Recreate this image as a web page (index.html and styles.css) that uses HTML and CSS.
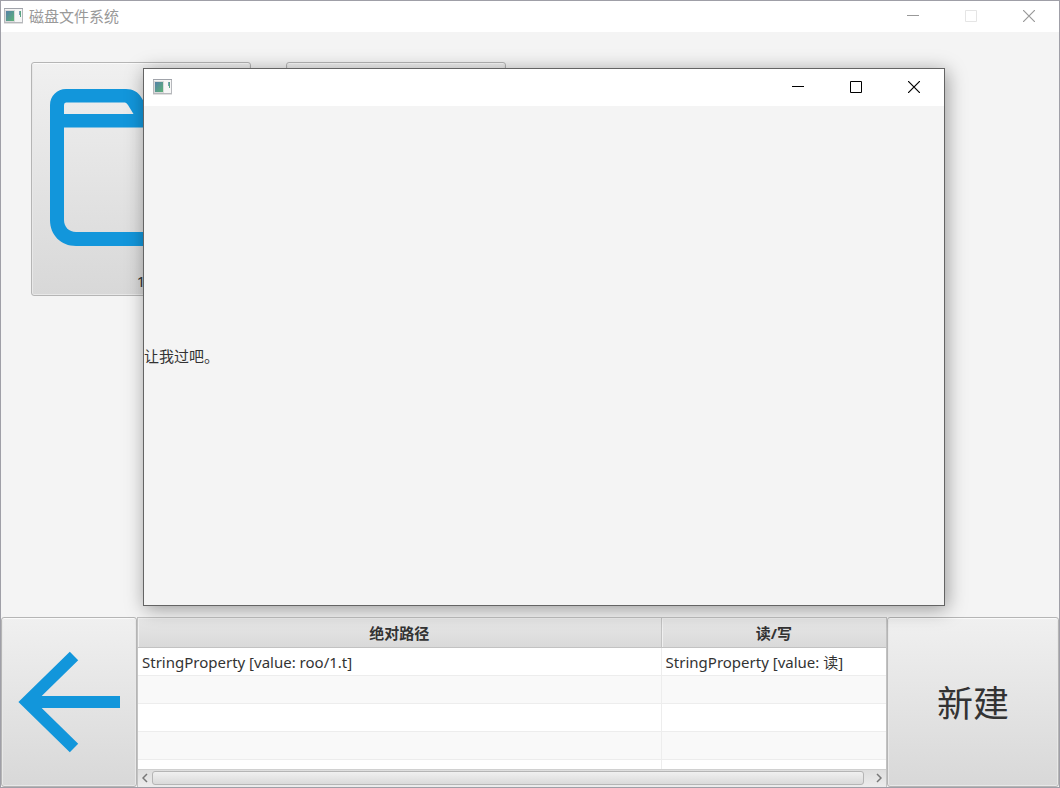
FILE: index.html
```html
<!DOCTYPE html>
<html lang="zh-CN">
<head>
<meta charset="utf-8">
<title>磁盘文件系统</title>
<link rel="stylesheet" href="styles.css">
</head>
<body>
<svg class="defs" aria-hidden="true">
  <defs>
    <linearGradient id="screen" x1="0" y1="0" x2="1" y2="1">
      <stop offset="0" stop-color="#5580a8"/>
      <stop offset="1" stop-color="#5cb377"/>
    </linearGradient>
    <symbol id="app" viewBox="0 0 19 16">
      <rect x=".5" y=".5" width="18" height="14" fill="#f6f6f6" stroke="#b6b8bc"/>
      <path d="M0 .5h19" stroke="#a0a3aa"/>
      <path d="M0 15.500h19" stroke="#e0e0e0"/>
      <rect x="1.500" y="2.500" width="9" height="11" fill="#fff" stroke="#dadada"/>
      <rect x="2" y="3" width="8" height="10" fill="url(#screen)"/>
      <path d="M16.500 3v6" stroke="#5aa583"/>
      <path d="M15.500 3v4" stroke="#7d9fb5"/>
    </symbol>
    <symbol id="min" viewBox="0 0 12 12"><path d="M0 5.500h12" stroke="currentColor"/></symbol>
    <symbol id="max" viewBox="0 0 12 12"><path d="M.5 .5h11v11H.5z" fill="none" stroke="currentColor"/></symbol>
    <symbol id="close" viewBox="0 0 12 12"><path d="M0 0l12 12M12 0L0 12" stroke="currentColor" stroke-width="1.200"/></symbol>
  </defs>
</svg>

<main class="window">
  <header class="titlebar inactive">
    <svg class="app-icon"><use href="#app"/></svg>
    <h1 class="title">磁盘文件系统</h1>
    <div class="controls">
      <button type="button" aria-label="最小化"><svg><use href="#min"/></svg></button>
      <button type="button" aria-label="最大化" disabled><svg><use href="#max"/></svg></button>
      <button type="button" aria-label="关闭"><svg><use href="#close"/></svg></button>
    </div>
  </header>

  <section class="files">
    <button type="button" class="tile raised">
      <svg class="folder" viewBox="0 0 182 158" aria-hidden="true">
        <path fill="#1296db" fill-rule="evenodd" d="M16 1H76C83 1 88 4 91 9L101 25H160Q182 25 182 47V132Q182 158 157 158H26C11 158 0 147 0 132V17C0 8 7 1 16 1ZM16 14.500Q14 14.500 14 17V26H83.500L78 17Q76.500 14.500 75 14.500ZM14 39.500V132C14 139 19 144 26 144H157Q168 144 168 133V39.500Z"/>
      </svg>
      <span>1</span>
    </button>
    <button type="button" class="tile raised" aria-label="1.t"></button>
  </section>

  <footer class="bottom">
    <button type="button" class="back raised" aria-label="返回">
      <svg viewBox="0 0 102 102"><path d="M56 5L9 51L56 97M9 51H102" fill="none" stroke="#1296db" stroke-width="12"/></svg>
    </button>
    <div class="table-pane">
      <div class="table-view">
        <table>
          <colgroup><col class="path-col"><col></colgroup>
          <thead><tr><th scope="col">绝对路径</th><th scope="col">读/写</th></tr></thead>
          <tbody>
            <tr><td>StringProperty [value: roo/1.t]</td><td>StringProperty [value: 读]</td></tr>
            <tr><td></td><td></td></tr>
            <tr><td></td><td></td></tr>
            <tr><td></td><td></td></tr>
            <tr><td></td><td></td></tr>
          </tbody>
        </table>
      </div>
      <div class="scrollbar">
        <button type="button" aria-label="向左滚动"><svg viewBox="0 0 6 10"><path d="M5 1L1 5l4 4"/></svg></button>
        <div class="thumb"></div>
        <button type="button" aria-label="向右滚动"><svg viewBox="0 0 6 10"><path d="M1 1l4 4-4 4"/></svg></button>
      </div>
    </div>
    <button type="button" class="create raised">新建</button>
  </footer>
</main>

<section class="dialog" role="dialog" aria-label="1.t">
  <header class="titlebar">
    <svg class="app-icon"><use href="#app"/></svg>
    <div class="controls">
      <button type="button" aria-label="最小化"><svg><use href="#min"/></svg></button>
      <button type="button" aria-label="最大化"><svg><use href="#max"/></svg></button>
      <button type="button" aria-label="关闭"><svg><use href="#close"/></svg></button>
    </div>
  </header>
  <p class="dialog-text">让我过吧。</p>
</section>
</body>
</html>
```
FILE: styles.css
```css
* {
  box-sizing: border-box;
}

body {
  margin: 0;
  color: #333;
  font: 15px/20px "Noto Sans", "Noto Sans CJK SC", sans-serif;
}

button {
  margin: 0;
  padding: 0;
  border: 0;
  background: none;
  color: inherit;
  font: inherit;
}

.defs {
  position: absolute;
  width: 0;
  height: 0;
}

.window {
  display: flex;
  flex-direction: column;
  height: 100vh;
  overflow: hidden;
  border: 1px solid #9f9fa7;
  background: #f4f4f4;
}

.titlebar {
  display: flex;
  flex: none;
  align-items: center;
  height: 37px;
  padding: 0 1px 2px 9px;
  background: #fff;
  color: #000;
}

.titlebar.inactive {
  height: 31px;
  padding-left: 3px;
  color: #999;
}

.app-icon {
  width: 19px;
  height: 16px;
}

.title {
  margin: 0 0 0 6px;
  font-size: 15px;
  font-weight: 400;
}

.controls {
  display: flex;
  align-self: stretch;
  margin-left: auto;
}

.controls button {
  display: grid;
  place-items: center;
  width: 58px;
}

.controls button:disabled {
  color: #e5e5e5;
}

.controls svg {
  width: 12px;
  height: 12px;
}

.files {
  display: flex;
  flex: 1;
  align-items: flex-start;
  gap: 35px;
  padding: 30px;
}

.raised {
  border: 1px solid #b5b5b5;
  border-radius: 3px;
  background: linear-gradient(#f0f0f0, #d8d8d8);
  box-shadow: inset 0 1px #fafafa, inset 0 0 0 1px #e8e8e8;
}

.tile {
  display: flex;
  flex-direction: column;
  align-items: center;
  justify-content: space-between;
  width: 220px;
  height: 234px;
  padding: 25px 18px 4px;
}

.folder {
  width: 182px;
  height: 158px;
}

.bottom {
  display: flex;
  flex: none;
  height: 170px;
}

.back {
  display: grid;
  place-items: center;
  width: 136px;
}

.back svg {
  width: 102px;
  height: 102px;
}

.create {
  width: 172px;
  padding-top: 4px;
  font-size: 36px;
  line-height: 48px;
}

.table-pane {
  display: flex;
  flex: 1;
  flex-direction: column;
  min-width: 0;
  border: 1px solid #c2c2c2;
  border-bottom: 0;
}

.table-view {
  flex: 1;
  overflow: hidden;
  background: #fff;
}

table {
  width: 100%;
  border-collapse: separate;
  border-spacing: 0;
  table-layout: fixed;
}

.path-col {
  width: 70%;
}

th {
  height: 30px;
  padding: 0;
  border-right: 1px solid #c2c2c2;
  border-bottom: 1px solid #c2c2c2;
  background: linear-gradient(#e8e8e8, #d9d9d9);
  box-shadow: inset 1px 1px #f0f0f0;
  font-weight: 700;
}

td {
  height: 28px;
  padding: 0 4px;
  border-right: 1px solid #ededed;
  border-bottom: 1px solid #ededed;
  white-space: nowrap;
}

th:last-child,
td:last-child {
  border-right: 0;
}

tbody tr:nth-child(even) {
  background: #f9f9f9;
}

.scrollbar {
  display: flex;
  flex: none;
  align-items: center;
  gap: 2px;
  height: 18px;
  padding: 0 2px 1px;
  border-top: 1px solid #d0d0d0;
  background: linear-gradient(#dedede, #ececec);
}

.scrollbar button {
  display: grid;
  place-items: center;
  width: 10px;
  height: 16px;
}

.scrollbar button:last-child {
  margin-left: 8px;
}

.scrollbar svg {
  width: 6px;
  height: 10px;
  fill: none;
  stroke: #777;
  stroke-width: 1.5;
}

.thumb {
  flex: 1;
  height: 14px;
  border: 1px solid #b5b5b5;
  border-radius: 3px;
  background: linear-gradient(#f0f0f0, #dadada);
}

/* Floating viewer window above the file browser */
.dialog {
  position: absolute;
  top: 68px;
  left: 143px;
  display: flex;
  flex-direction: column;
  width: 802px;
  height: 538px;
  border: 1px solid #646464;
  background: #f4f4f4;
  box-shadow: 2px 3px 18px rgba(0, 0, 0, 0.38);
}

.dialog-text {
  margin: auto 0;
}
```
